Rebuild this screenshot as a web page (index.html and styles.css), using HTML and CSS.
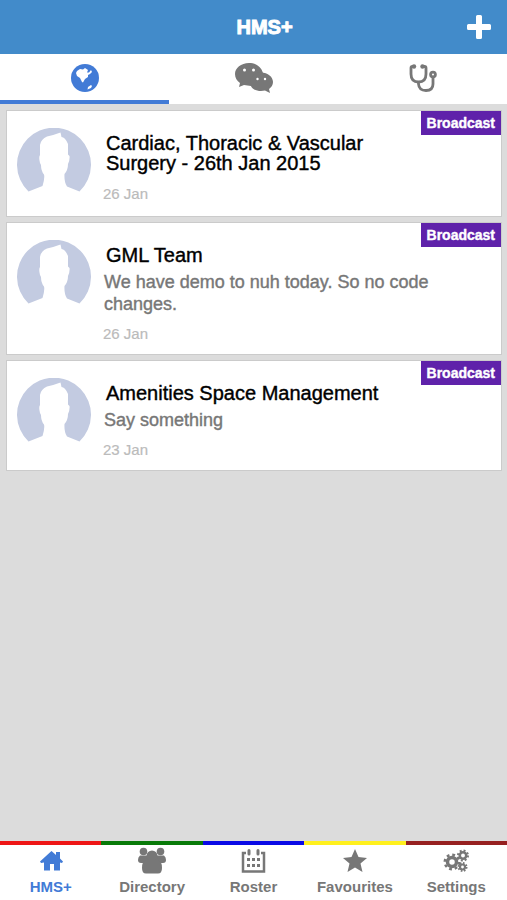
FILE: index.html
```html
<!DOCTYPE html>
<html lang="en">
<head>
<meta charset="utf-8">
<meta name="viewport" content="width=device-width, initial-scale=1">
<title>HMS+</title>
<link rel="stylesheet" href="styles.css">
</head>
<body>
<svg class="defs" aria-hidden="true">
  <symbol id="avatar" viewBox="0 0 74 74">
    <path fill="#c3cbe1" d="M11.500 63.500A37 37 0 1 1 62.500 63.500L50 58.500Q47 54 47.500 46Q51 42 51 36Q53 32 52.500 28L51 26.500V16Q48 9 44.500 9L43.500 4.500Q37 7 30 8.500Q24 11 23 17V27Q21.500 29 23 35L24 37Q24 43 27 46.500Q28 50 25.500 58Z"/>
  </symbol>
</svg>
<div class="app">
  <header class="bar">
    <h1 class="bar-title">HMS+</h1>
    <button class="add" type="button" aria-label="Add">
      <svg viewBox="0 0 24 24" class="add-icon"><path fill="#fff" d="M9 1.500Q9 0 10.500 0H13.500Q15 0 15 1.500V9H22.500Q24 9 24 10.500V13.500Q24 15 22.500 15H15V22.500Q15 24 13.500 24H10.500Q9 24 9 22.500V15H1.500Q0 15 0 13.500V10.500Q0 9 1.500 9H9Z"/></svg>
    </button>
  </header>
  <nav class="tabs">
    <a href="#all" class="tab active" aria-label="All">
      <svg class="tab-icon" viewBox="0 0 28 28"><circle cx="14" cy="14" r="14" fill="currentColor"/><path fill="#fff" d="M6 7L9 5L12 5.500L14 4L17 6L16 8.500L18 8.500L20 6L21 8L19 10L17 11L17 13L14 15L12 18.500L11 18L9 14L6 12L5 9ZM17 23L20 21L21 22L20 24L16.500 25.500Z"/></svg>
    </a>
    <a href="#chats" class="tab" aria-label="Chats">
      <svg class="chat-icon" viewBox="0 0 38 32"><path fill="currentColor" d="M14 1C6 1 0 6 0 12C0 16 2 19 5 21L4 25L9 23L16 24L28 11C26 4 20 1 14 1Z"/><path fill="currentColor" d="M26 10.500C19 10.500 15 15 15 20C15 26 20 29 26 29L30 28.500L35 31L34 27C36.500 25 38 23 38 20C38 15 33 10.500 26 10.500Z"/><g fill="#fff"><circle cx="9.500" cy="8" r="1.500"/><circle cx="18.500" cy="8" r="1.500"/><circle cx="22.500" cy="17" r="1.200"/><circle cx="30" cy="17" r="1.200"/></g></svg>
    </a>
    <a href="#clinical" class="tab" aria-label="Clinical">
      <svg class="tab-icon" viewBox="0 0 28 28"><g fill="none" stroke="currentColor" stroke-width="2.800"><path d="M5 2.500H3.500Q2 2.500 2 4V10Q2 18 9.500 18Q17 18 17 10V4Q17 2.500 15.500 2.500H14M9.500 18V20Q10 26.500 17 26.500Q24 26.500 24 20V13"/><circle cx="24" cy="10.500" r="2.400"/></g><g fill="currentColor"><circle cx="5" cy="2.500" r="2.200"/><circle cx="13.500" cy="2.500" r="2.200"/></g></svg>
    </a>
  </nav>
  <main class="feed">
    <article class="card">
      <svg class="avatar" role="img" aria-label="Profile"><use href="#avatar"/></svg>
      <div class="content">
        <h2>Cardiac, Thoracic &amp; Vascular Surgery - 26th Jan 2015</h2>
        <time>26 Jan</time>
      </div>
      <span class="badge">Broadcast</span>
    </article>
    <article class="card">
      <svg class="avatar" role="img" aria-label="Profile"><use href="#avatar"/></svg>
      <div class="content">
        <h2>GML Team</h2>
        <p>We have demo to nuh today. So no code changes.</p>
        <time>26 Jan</time>
      </div>
      <span class="badge">Broadcast</span>
    </article>
    <article class="card">
      <svg class="avatar" role="img" aria-label="Profile"><use href="#avatar"/></svg>
      <div class="content">
        <h2>Amenities Space Management</h2>
        <p>Say something</p>
        <time>23 Jan</time>
      </div>
      <span class="badge">Broadcast</span>
    </article>
  </main>
  <nav class="bottom">
    <a href="#home" class="item red current">
      <svg viewBox="0 0 28 28"><path fill="currentColor" d="M14.500 4L19 8V5H23V11.500L26 14.500L25 16L23 15.500V23.500H17V17H13V23.500H7V15.500L4 16L3 14.500Z"/></svg>
      <span>HMS+</span>
    </a>
    <a href="#directory" class="item green">
      <svg viewBox="0 0 28 28"><g fill="currentColor"><circle cx="5.500" cy="4.500" r="3.800"/><circle cx="22.500" cy="4.500" r="3.800"/><path d="M2 8.500H26Q28 10 28 13Q28 16 25 16H3Q0 16 0 13Q0 10 2 8.500Z"/><circle cx="14" cy="9" r="5.500"/><path d="M8 13Q4 14 4 21Q4 26.500 8 26.500H20Q24 26.500 24 21Q24 14 20 13Z"/></g></svg>
      <span>Directory</span>
    </a>
    <a href="#roster" class="item blue">
      <svg viewBox="0 0 28 28"><path fill="none" stroke="currentColor" stroke-width="2.500" d="M7 6H4V24.500H25V6H22"/><path stroke="currentColor" stroke-width="3" stroke-linecap="round" d="M10 3.500V7M19 3.500V7"/><path fill="currentColor" d="M8 11H11V14H8ZM13 11H16V14H13ZM18 11H21V14H18ZM8 17H11V20H8ZM13 17H16V20H13ZM18 17H21V20H18Z"/></svg>
      <span>Roster</span>
    </a>
    <a href="#favourites" class="item yellow">
      <svg viewBox="0 0 28 28"><path fill="currentColor" d="M14 2L17.500 10L26 11L19.500 16.500L21.500 25L14 20.500L6.500 25L8.500 16.500L2 11L10.500 10Z"/></svg>
      <span>Favourites</span>
    </a>
    <a href="#settings" class="item brown">
      <svg viewBox="0 0 28 28"><g fill="none" stroke="currentColor"><circle cx="10" cy="15" r="4.500" stroke-width="3.500"/><circle cx="10" cy="15" r="7.200" stroke-width="2.500" stroke-dasharray="2.83 2.83"/><circle cx="21" cy="8.500" r="3.200" stroke-width="2.500"/><circle cx="21" cy="8.500" r="5" stroke-width="2" stroke-dasharray="1.96 1.96"/><circle cx="20.500" cy="20" r="2.500" stroke-width="2.200"/><circle cx="20.500" cy="20" r="4" stroke-width="2" stroke-dasharray="1.57 1.57"/></g></svg>
      <span>Settings</span>
    </a>
  </nav>
</div>
</body>
</html>
```
FILE: styles.css
```css
* { box-sizing: border-box; }
body { margin: 0; font-family: "Liberation Sans", Arial, sans-serif; background: #dcdcdc; }
h1, h2, p { margin: 0; }
a { color: #777; text-decoration: none; }
.defs { position: absolute; width: 0; height: 0; }
.app { min-height: 100vh; display: flex; flex-direction: column; }
.bar { display: grid; grid-template-columns: 1fr auto 1fr; align-items: center; height: 54px; padding: 0 16px 0 38px; background: #428bca; color: #fff; }
.bar-title { grid-column: 2; font-size: 20px; line-height: 24px; -webkit-text-stroke: 1px #fff; }
.add { justify-self: end; display: flex; padding: 0; border: 0; background: none; }
.add-icon { width: 24px; height: 24px; }
.tabs { display: grid; grid-template-columns: repeat(3, 1fr); height: 50px; background: #fff; }
.tab { display: flex; align-items: center; justify-content: center; padding-top: 2px; border-bottom: 4px solid #fff; }
.tab.active { color: #427bd6; border-color: #427bd6; }
.tab-icon { width: 28px; height: 28px; }
.chat-icon { width: 38px; height: 32px; }
.feed { flex: 1; display: flex; flex-direction: column; gap: 5px; padding: 6px 5px 6px 6px; }
.card { position: relative; display: flex; gap: 12px; min-height: 107px; padding: 16px 66px 10px 10px; background: #fff; border: 1px solid #cbcbcb; }
.avatar { flex: none; width: 74px; height: 74px; margin-top: 1px; }
.content { padding-top: 6px; }
h2 { padding-left: 3px; margin-bottom: 6px; font-size: 20px; line-height: 20px; font-weight: 400; color: #000; -webkit-text-stroke: 0.4px #000; }
p { padding-left: 1px; font-size: 18px; line-height: 22px; color: #777; -webkit-text-stroke: 0.4px #777; }
time { display: block; margin-top: 9px; font-size: 15px; line-height: 20px; color: #bbb; -webkit-text-stroke: 0.2px #bbb; }
h2 + time { margin-top: 11px; }
.badge { position: absolute; top: 0; right: 0; padding: 2px 6px; background: #5f22aa; color: #fff; font-size: 14px; line-height: 20px; font-weight: 700; -webkit-text-stroke: 0.4px #fff; }
.bottom { display: grid; grid-template-columns: repeat(5, 1fr); height: 59px; background: #fff; }
.item { display: flex; flex-direction: column; align-items: center; gap: 2px; border-top: 4px solid; font-size: 15px; line-height: 20px; font-weight: 700; }
.item svg { width: 28px; height: 28px; margin-top: 2px; }
.current { color: #427bd6; }
.red { border-color: #ee1515; }
.green { border-color: #087a08; }
.blue { border-color: #0a0ae6; }
.yellow { border-color: #fff01e; }
.brown { border-color: #962020; }
```
